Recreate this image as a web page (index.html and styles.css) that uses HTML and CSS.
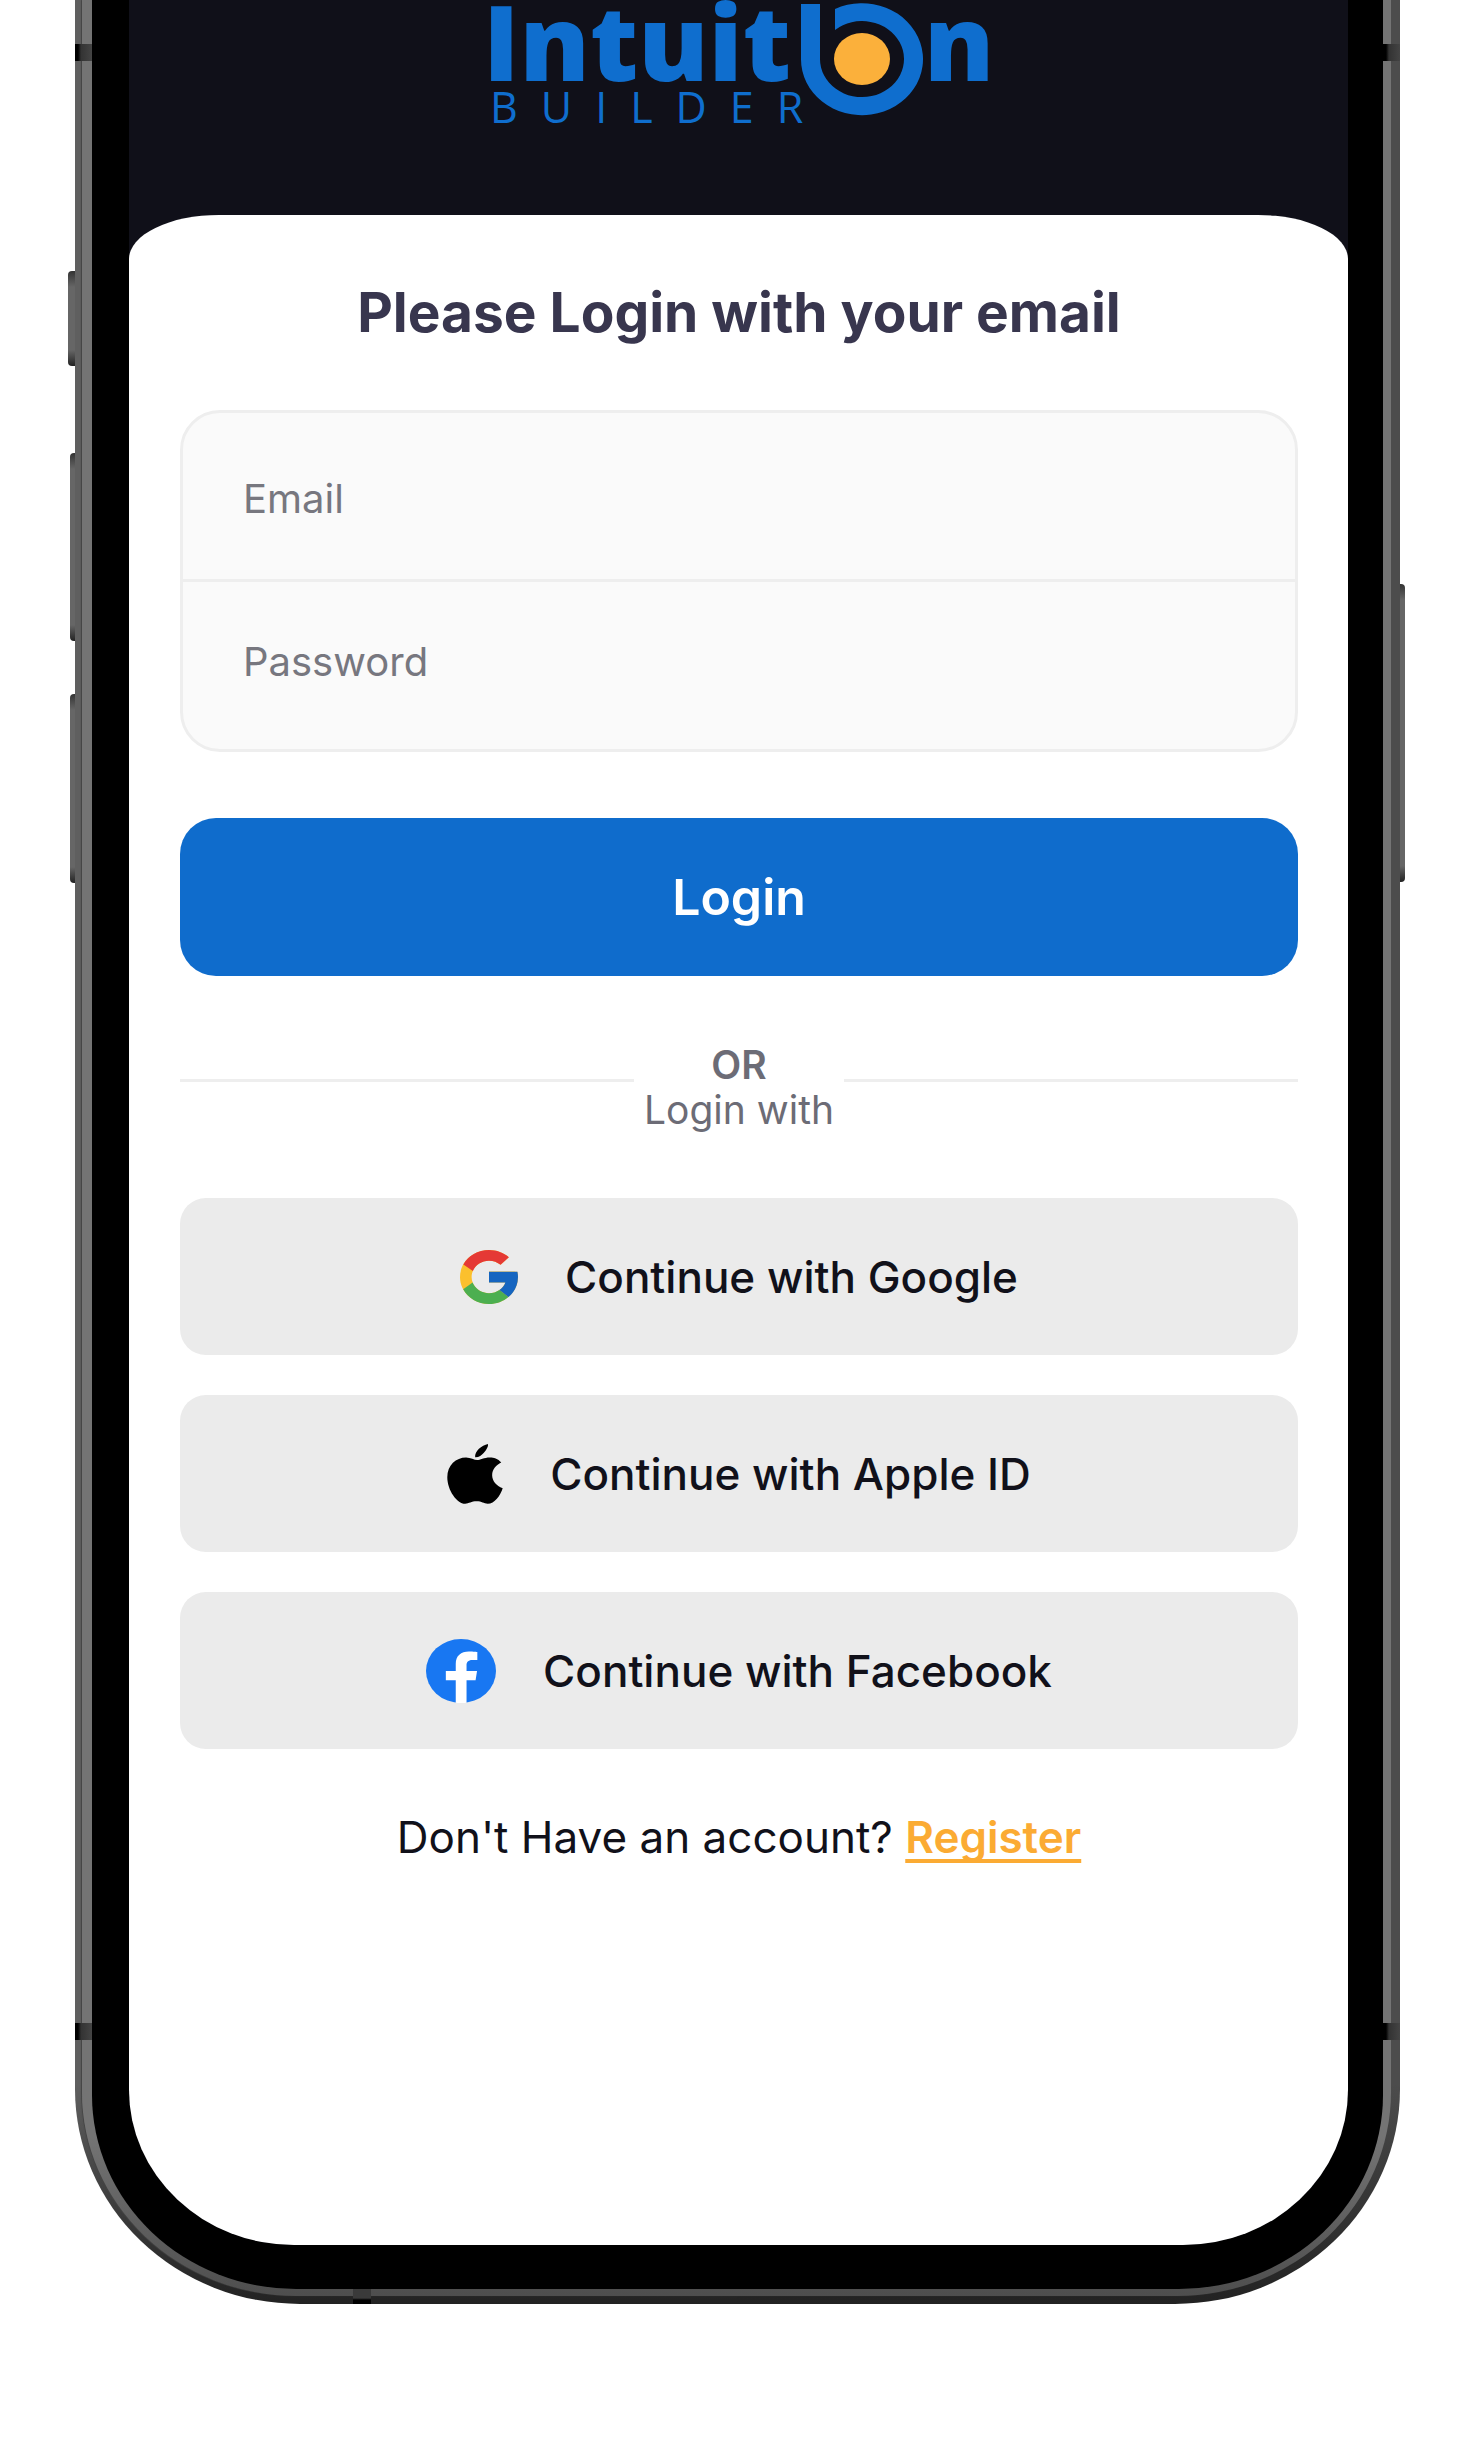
FILE: index.html
```html
<!DOCTYPE html>
<html lang="en">
<head>
<meta charset="utf-8">
<meta name="viewport" content="width=device-width, initial-scale=1">
<title>Intuition Builder – Login</title>
<link rel="stylesheet" href="styles.css">
</head>
<body>
<div class="phone">
  <span class="key key-silent"></span>
  <span class="key key-up"></span>
  <span class="key key-down"></span>
  <span class="key key-power"></span>
  <div class="rail">
    <div class="bezel">
      <main class="screen">
        <header class="brand">
          <svg class="logo" viewBox="483 0 510 128" role="img" aria-label="Intuition Builder">
            <g fill="#0f6ece">
              <text class="logo-name" x="482" y="81">Intuit</text>
              <text class="logo-name" x="923" y="81">n</text>
              <text class="logo-sub" x="489" y="123">BUILDER</text>
              <path d="M800 4H819V59A42 38 0 1 0 834 30V9A61 56 0 1 1 800 59Z"/>
            </g>
            <ellipse cx="861" cy="59" rx="28" ry="26" fill="#fbb03b"/>
          </svg>
        </header>
        <section class="sheet">
          <h1 class="title">Please Login with your email</h1>
          <form class="form">
            <div class="fields">
              <label class="sr-only" for="email">Email</label>
              <input class="field" id="email" type="email" placeholder="Email">
              <label class="sr-only" for="password">Password</label>
              <input class="field" id="password" type="password" placeholder="Password">
            </div>
            <button class="login" type="submit">Login</button>
          </form>
          <div class="divider">
            <p class="divider-text"><strong>OR</strong><br>Login with</p>
          </div>
          <div class="socials">
            <button class="social" type="button">
              <svg width="58" height="54" viewBox="4 4 40 40" preserveAspectRatio="none" aria-hidden="true">
                <path fill="#fbc02d" d="M43.6 20.1H42V20H24v8h11.3C33.7 32.7 29.2 36 24 36c-6.600 0-12-5.400-12-12s5.400-12 12-12c3.100 0 5.800 1.200 8 3l5.700-5.700C34 6.100 29.300 4 24 4 13 4 4 13 4 24s9 20 20 20 20-9 20-20c0-1.300-.1-2.600-.4-3.900z"/>
                <path fill="#e53935" d="M6.300 14.700l6.600 4.800C14.700 15.100 19 12 24 12c3.100 0 5.800 1.200 8 3l5.700-5.700C34 6.100 29.300 4 24 4 16.300 4 9.700 8.300 6.300 14.700z"/>
                <path fill="#4caf50" d="M24 44c5.200 0 9.900-2 13.400-5.200l-6.200-5.200C29.200 35.100 26.700 36 24 36c-5.200 0-9.600-3.300-11.300-7.900l-6.500 5C9.500 39.600 16.200 44 24 44z"/>
                <path fill="#1565c0" d="M43.600 20.100H24v8h11.300c-.8 2.200-2.200 4.200-4.100 5.600l6.200 5.200C37 39.200 44 34 44 24c0-1.300-.1-2.600-.4-3.900z"/>
              </svg>
              Continue with Google
            </button>
            <button class="social" type="button">
              <svg width="56" height="60" viewBox="2.200 0.700 19.100 22.800" preserveAspectRatio="none" aria-hidden="true">
                <path d="M17.600 12.600c0-2.500 1.400-3.800 3.100-4.900-1.100-1.500-2.700-1.900-3.700-1.900-1.900-.1-3.600 1-4.500 1s-2.300-1-3.800-1C5.300 5.800 2.300 8.700 2.300 13.300c0 4.900 3.300 10.100 6.100 10.100 1.300 0 2.100-.9 3.900-.9s2.400.9 3.800.9c2.300 0 4.300-3.100 5.100-5.900-2.200-.9-3.600-2.700-3.600-4.900zM14.700 4.100c1.100-1.300 1.600-2.500 1.500-3.400-2.200.5-4.600 2.700-4.400 5 1.200.1 2.200-.7 2.900-1.600z"/>
              </svg>
              Continue with Apple ID
            </button>
            <button class="social" type="button">
              <svg width="70" height="64" viewBox="0 0 24 24" preserveAspectRatio="none" aria-hidden="true">
                <circle cx="12" cy="12" r="12" fill="#1877f2"/>
                <path fill="#fff" d="M17 15.500l.5-3.500h-3.600V9.800c0-1 .5-1.900 2-1.900h1.700V4.900s-1.400-.2-2.900-.2c-2.700 0-4.500 1.600-4.500 4.600V12H6.800v3.500h3.400v8.400a12 12 0 0 0 3.700 0v-8.400z"/>
              </svg>
              Continue with Facebook
            </button>
          </div>
          <p class="signup">Don't Have an account? <a class="register" href="#register">Register</a></p>
        </section>
      </main>
    </div>
  </div>
  <span class="band band-top-left"></span>
  <span class="band band-top-right"></span>
  <span class="band band-low-left"></span>
  <span class="band band-low-right"></span>
  <span class="band band-bottom"></span>
</div>
</body>
</html>
```
FILE: styles.css
```css
* { box-sizing: border-box; }

body {
  margin: 0;
  padding: 0 72px 152px 75px;
  background: #fff;
  font-family: Inter, "Liberation Sans", sans-serif;
  color: #11111a;
}

/* Device frame */
.phone {
  position: relative;
  padding: 0 9px 8px 7px;
  border-radius: 0 0 225px 225px / 0 0 215px 215px;
  background:
    linear-gradient(to bottom, transparent calc(100% - 220px), #222 100%),
    linear-gradient(to right, #5f5f5f 50%, #4c4c4c 50%);
}

.rail {
  padding: 0 8px 7px 10px;
  border-radius: 0 0 214px 214px / 0 0 204px 204px;
  background: linear-gradient(to bottom, #747474 calc(100% - 160px), #4e4e4e 100%);
  box-shadow: -1px 0 1px #444;
}

.bezel {
  padding: 0 35px 44px 37px;
  border-radius: 0 0 204px 204px / 0 0 194px 194px;
  background: #000;
}

.screen {
  overflow: hidden;
  border-radius: 0 0 165px 165px / 0 0 155px 155px;
  background: #101019;
}

.key {
  position: absolute;
  width: 5px;
  background: linear-gradient(to bottom, #333, #666 16px, #666 calc(100% - 16px), #222);
}
.key-silent { top: 271px; left: -7px; width: 7px; height: 95px; border-radius: 4px 0 0 4px; }
.key-up { top: 453px; left: -5px; height: 188px; border-radius: 4px 0 0 4px; }
.key-down { top: 694px; left: -5px; height: 189px; border-radius: 4px 0 0 4px; }
.key-power { top: 584px; right: -5px; height: 298px; border-radius: 0 4px 4px 0; }

.band {
  position: absolute;
  width: 17px;
  height: 17px;
  background: linear-gradient(to right, #000 3px, #333 6px, #444);
}
.band-top-left { top: 44px; left: 0; }
.band-top-right { top: 44px; right: 0; }
.band-low-left { bottom: 264px; left: 0; }
.band-low-right { bottom: 264px; right: 0; }
.band-bottom { bottom: 0; left: 278px; width: 18px; height: 15px; background: linear-gradient(#3a3a3a 9px, #000 11px); }

/* Header */
.brand {
  padding-bottom: 87px;
}
.logo {
  display: block;
  width: 510px;
  height: 128px;
  margin: 0 auto;
}
.logo-name { font: 800 105px "Open Sans", sans-serif; }
.logo-sub { font: 400 43px "Open Sans", sans-serif; letter-spacing: 23px; }

/* Login sheet */
.sheet {
  padding: 65px 50px 381px 51px;
  border-radius: 90px 90px 0 0 / 44px 44px 0 0;
  background: #fff;
}

.title {
  margin: 0 0 66px;
  text-align: center;
  font-size: 55px;
  line-height: 64px;
  font-weight: 700;
  color: #38364e;
}

.fields {
  display: grid;
  overflow: hidden;
  border: 3px solid #eee;
  border-radius: 40px;
  background: #fafafa;
}
.field {
  width: 100%;
  height: 166px;
  padding: 4px 60px 0;
  border: 0;
  background: transparent;
  font: inherit;
  font-size: 40px;
  color: #38364e;
}
.field + .sr-only + .field {
  height: 170px;
  border-top: 3px solid #eee;
  padding: 0 60px 8px;
}
.field::placeholder { color: #77777f; opacity: 1; }

.login {
  display: block;
  width: 100%;
  height: 158px;
  margin-top: 66px;
  border: 0;
  border-radius: 36px;
  background: #0f6ccc;
  color: #fff;
  font: inherit;
  font-size: 50px;
  font-weight: 600;
}

.divider {
  display: flex;
  align-items: center;
  gap: 10px;
  margin: 66px 0;
}
.divider::before,
.divider::after {
  content: "";
  flex: 1;
  height: 3px;
  margin-bottom: 14px;
  background: #eee;
}
.divider-text {
  margin: 0;
  text-align: center;
  font-size: 39px;
  line-height: 45px;
  color: #6c6c76;
}
.divider-text strong { font-weight: 600; }

.socials {
  display: grid;
  gap: 40px;
}
.social {
  display: flex;
  align-items: center;
  justify-content: center;
  gap: 47px;
  height: 157px;
  padding: 0;
  border: 0;
  border-radius: 26px;
  background: #ebebeb;
  color: #11111a;
  font: inherit;
  font-size: 44px;
  font-weight: 500;
}

.signup {
  margin: 61px 0 0;
  text-align: center;
  font-size: 44px;
  line-height: 54px;
}
.register {
  color: #fbab33;
  font-weight: 600;
  text-decoration: underline;
  text-decoration-thickness: 4px;
  text-underline-offset: 6px;
  text-decoration-skip-ink: none;
}

.sr-only {
  position: absolute;
  width: 1px;
  height: 1px;
  overflow: hidden;
  clip-path: inset(50%);
}
```
